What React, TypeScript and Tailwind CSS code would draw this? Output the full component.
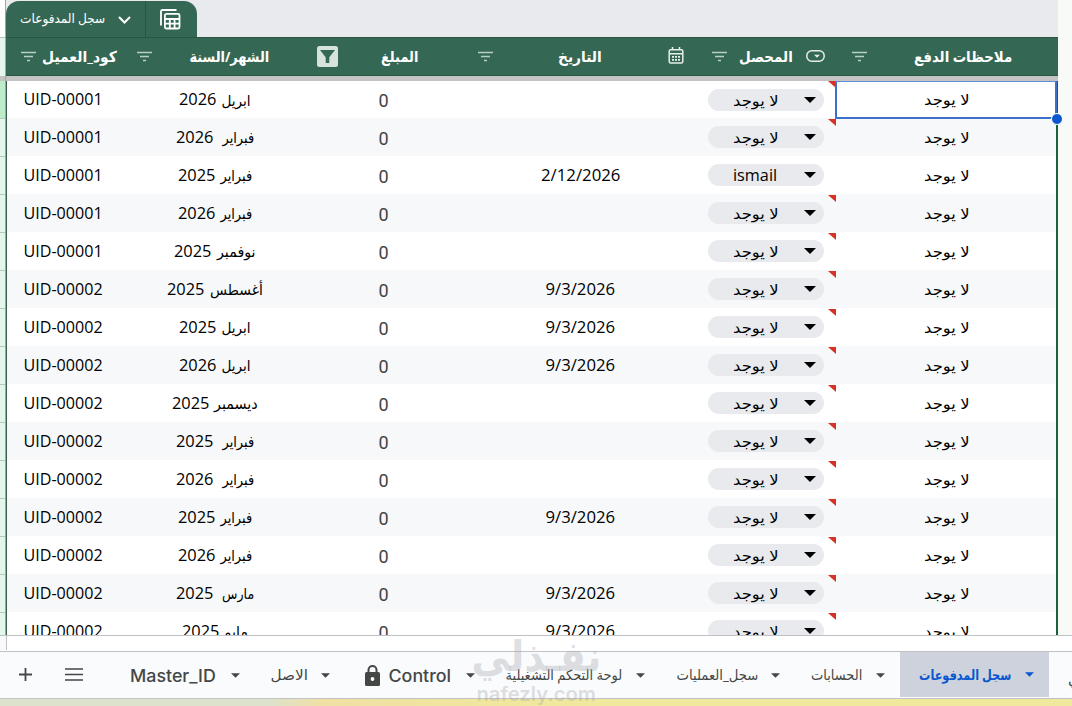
import React from 'react';

const months = [
  ['ابريل', '2026'], ['فبراير', '2026'], ['فبراير', '2025'], ['فبراير', '2026'], ['نوفمبر', '2025'],
  ['أغسطس', '2025'], ['ابريل', '2025'], ['ابريل', '2026'], ['ديسمبر', '2025'], ['فبراير', '2025'],
  ['فبراير', '2026'], ['فبراير', '2025'], ['فبراير', '2026'], ['مارس', '2025'], ['مايو', '2025'],
];
const monthWidths = [29, 32, 32, 32, 39, 53, 29, 29, 44, 32, 32, 32, 32, 32, 24];
const wideGap = [1, 9, 10, 13];
const dates = ['', '', '2/12/2026', '', '', '9/3/2026', '9/3/2026', '9/3/2026', '', '', '', '9/3/2026', '', '9/3/2026', '9/3/2026'];

/* Centres one line of text and condenses or expands it to the given width. */
function Fit({ w, children, className = '', rtl = false }: { w: number; children: string; className?: string; rtl?: boolean }) {
  const ref = React.useRef<HTMLSpanElement>(null);
  const [scale, setScale] = React.useState(1);
  React.useLayoutEffect(() => {
    if (ref.current) setScale(w / ref.current.offsetWidth);
  }, [w, children]);
  return (
    <span className="flex shrink-0 justify-center" style={{ width: w }}>
      <span ref={ref} dir={rtl ? 'rtl' : 'ltr'} className={`inline-block shrink-0 whitespace-pre ${className}`} style={{ transform: `scaleX(${scale})` }}>
        {children}
      </span>
    </span>
  );
}

function FilterLines({ className = '' }: { className?: string }) {
  return (
    <svg className={`h-[11px] w-[15px] shrink-0 ${className}`} viewBox="0 0 15 11" fill="none" stroke="#b9cfc4" strokeWidth="1.4">
      <path d="M0 1.5h15M3 5.5h9M6 9.5h3" />
    </svg>
  );
}

function Caret({ className = '' }: { className?: string }) {
  return (
    <svg className={`shrink-0 ${className}`} viewBox="0 0 12 6" fill="currentColor">
      <path d="M0 0h12L6 6z" />
    </svg>
  );
}

const headText = 'text-[15px] font-bold text-white';

function Header() {
  return (
    <div className="flex h-[39px] items-center border-y border-[#26583f] bg-[#356854] pl-[15px]">
      <FilterLines />
      <div className="ml-[6px]"><Fit w={75} rtl className={headText}>كود_العميل</Fit></div>
      <FilterLines className="ml-[20px]" />
      <div className="ml-[37px]"><Fit w={80} rtl className={headText}>الشهر/السنة</Fit></div>
      <svg className="ml-[48px] h-[21px] w-[21px] shrink-0" viewBox="0 0 21 21">
        <rect width="21" height="21" rx="2.5" fill="#d7e3dc" />
        <path d="M3 4h15l-5.7 7.2V17H8.7v-5.8z" fill="#356854" />
      </svg>
      <div className="ml-[43px]"><Fit w={37} rtl className={headText}>المبلغ</Fit></div>
      <FilterLines className="ml-[60px]" />
      <div className="ml-[65px]"><Fit w={44} rtl className={headText}>التاريخ</Fit></div>
      <svg className="ml-[66px] h-[17px] w-[16px] shrink-0 -translate-y-px" viewBox="0 0 16 17" fill="none" stroke="#e5eee9" strokeWidth="1.5">
        <rect x="1.2" y="2.7" width="13.6" height="13.3" rx="1.5" />
        <path d="M1 6.7h14M4.5 0v3M11.5 0v3" />
        <path d="M4 9.8h2M7 9.8h2M10 9.8h2M4 12.8h2M7 12.8h2M10 12.8h2" strokeWidth="1.8" />
      </svg>
      <FilterLines className="ml-[28px]" />
      <div className="ml-[12px]"><Fit w={54} rtl className={headText}>المحصل</Fit></div>
      <svg className="ml-[13px] h-[12px] w-[19px] shrink-0 -translate-y-px" viewBox="0 0 19 12" fill="none">
        <rect x=".8" y=".8" width="17.4" height="10.4" rx="5" stroke="#e5eee9" strokeWidth="1.5" />
        <path d="M8 4.7h6l-3 3z" fill="#e5eee9" />
      </svg>
      <FilterLines className="ml-[27px]" />
      <div className="ml-[47px]"><Fit w={98} rtl className={headText}>ملاحظات الدفع</Fit></div>
    </div>
  );
}

function Row({ i }: { i: number }) {
  const name = i === 2;
  const cell = `flex items-center justify-center ${i === 0 ? '' : 'pt-px'}`;
  return (
    <div className={`grid shrink-0 grid-cols-[112px_192px_145px_249px_131px_221px] text-[15px] text-black ${i === 0 ? 'h-[37px]' : 'h-[38px]'} ${i % 2 ? 'bg-[#f6f8f9]' : 'bg-white'}`}>
      <div className={cell}><Fit w={79} className="text-[15.5px]">{i < 5 ? 'UID-00001' : 'UID-00002'}</Fit></div>
      <div className={`${cell} ${wideGap.includes(i) ? 'gap-[9px]' : 'gap-[5px]'}`}>
        <Fit w={37} className="text-[15.5px]">{months[i][1]}</Fit>
        <Fit w={monthWidths[i]} rtl>{months[i][0]}</Fit>
      </div>
      <div className={`flex items-center justify-center font-['Roboto',sans-serif] text-[18px] text-[#434343] ${i === 0 ? 'pt-px' : 'pt-[2px]'}`}>0</div>
      <div className={cell}>{dates[i] && <Fit w={i === 2 ? 79 : 70} className="text-[15.5px]">{dates[i]}</Fit>}</div>
      <div className="relative flex items-center pl-[3px]">
        <div className="flex h-[22px] w-[116px] items-center justify-between rounded-full bg-[#e8eaed] pr-[8px] pl-[25px]">
          <span className="pt-px">{name ? <Fit w={44} className="text-[15.5px]">ismail</Fit> : <Fit w={46} rtl>لا يوجد</Fit>}</span>
          <Caret className="h-[6px] w-[12px] text-black" />
        </div>
        {!name && (
          <svg className={`absolute right-0 h-[7px] w-[8px] ${i ? 'top-px' : 'top-0'}`} viewBox="0 0 8 7"><path d="M0 0h8v7z" fill="#d93025" /></svg>
        )}
      </div>
      {i === 0 ? (
        <div className="relative z-10 -ml-px flex h-[38px] items-center justify-center border-2 border-t border-[#3d70c9] border-t-[#5d8dd8] pl-px">
          <Fit w={46} rtl>لا يوجد</Fit>
          <span className="absolute -right-[8px] -bottom-[8px] box-content h-[10px] w-[10px] rounded-full border border-white bg-[#0b57d0]" />
        </div>
      ) : (
        <div className={cell}><Fit w={46} rtl>لا يوجد</Fit></div>
      )}
    </div>
  );
}

function TabCaret({ className = '' }: { className?: string }) {
  return <Caret className={`h-[5px] w-[9px] ${className}`} />;
}

const tabArabic = 'text-[14px] leading-[20px]';
const tabLatin = "font-['Inter',sans-serif] text-[17px] font-medium leading-[20px]";

function Tabs() {
  return (
    <div className="flex h-[48px] shrink-0 items-center overflow-hidden border-y border-[#bfc1c4] bg-[#f9fbfd] pl-[19px] text-[#444746]">
      <svg className="h-[13px] w-[13px] shrink-0 -translate-y-px" viewBox="0 0 13 13" stroke="currentColor" strokeWidth="1.8"><path d="M6.5 0v13M0 6.5h13" /></svg>
      <svg className="ml-[33px] h-[13px] w-[18px] shrink-0 -translate-y-px" viewBox="0 0 18 13" stroke="currentColor" strokeWidth="1.7"><path d="M0 1h18M0 6.5h18M0 12h18" /></svg>
      <div className="ml-[47px] pt-[2px]"><Fit w={86} className={tabLatin}>Master_ID</Fit></div>
      <TabCaret className="ml-[15px]" />
      <div className="ml-[31px]"><Fit w={37} rtl className={tabArabic}>الاصل</Fit></div>
      <TabCaret className="ml-[13px]" />
      <svg className="ml-[35px] h-[21px] w-[15px] shrink-0" viewBox="0 0 15 21" fill="none">
        <path d="M3.5 8V5a4 4 0 0 1 8 0v3" stroke="#444746" strokeWidth="2" />
        <rect y="7" width="15" height="14" rx="1.5" fill="#444746" />
        <circle cx="7.5" cy="14" r="1.9" fill="#f9fbfd" />
      </svg>
      <div className="ml-[8px] pt-[2px]"><Fit w={63} className={tabLatin}>Control</Fit></div>
      <TabCaret className="ml-[15px]" />
      <div className="ml-[30px]"><Fit w={117} rtl className={tabArabic}>لوحة التحكم التشغيلية</Fit></div>
      <TabCaret className="ml-[14px]" />
      <div className="ml-[31px]"><Fit w={82} rtl className={tabArabic}>سجل_العمليات</Fit></div>
      <TabCaret className="ml-[13px]" />
      <div className="ml-[31px]"><Fit w={51} rtl className={tabArabic}>الحسابات</Fit></div>
      <TabCaret className="ml-[14px]" />
      <div className="ml-[15px] flex h-[45px] w-[149px] shrink-0 items-center self-start bg-[#cdd2dc] pl-[19px] text-[#0b57d0]">
        <Fit w={92} rtl className="text-[14px] font-bold">سجل المدفوعات</Fit>
        <TabCaret className="ml-[14px]" />
      </div>
      <div className="ml-[19px] shrink-0 pt-[6px] text-[15px]">ي</div>
    </div>
  );
}

export default function App() {
  return (
    <div className="relative flex h-[706px] w-[1072px] flex-col overflow-hidden bg-white font-['Open_Sans','DejaVu_Sans',sans-serif]">
      <div className="flex h-[635px] shrink-0 overflow-hidden">
        <div className="flex w-[6px] shrink-0 flex-col border-r border-[#9ba9a1]">
          <div className="h-[38px] shrink-0 border-b border-[#b9c2bd] bg-white" />
          <div className="h-[38px] shrink-0 bg-[#e6f5ee]" />
          <div className="h-[5px] shrink-0 bg-[#c3c3c3]" />
          {months.map((_, i) => (
            <div key={i} className={`h-[38px] shrink-0 border-b border-[#b3cbbe] ${i === 0 ? 'bg-[#bdecca]' : 'bg-[#e2f6ec]'}`} />
          ))}
        </div>
        <div className="flex w-[1052px] shrink-0 flex-col">
          <div className="flex h-[37px] shrink-0 bg-[#e8eaed]">
            <div className="mt-px flex h-[36px] w-[191px] items-center rounded-t-[13px] bg-[#356854] pl-[14px]">
              <Fit w={85} rtl className="text-[13px] text-white">سجل المدفوعات</Fit>
              <svg className="ml-[13px] h-[8px] w-[13px] shrink-0 translate-y-px" viewBox="0 0 13 8" fill="none" stroke="white" strokeWidth="2"><path d="M1 1l5.5 5.5L12 1" /></svg>
              <div className="ml-[14px] h-full w-px bg-[#285640]" />
              <svg className="ml-[14px] h-[21px] w-[21px] shrink-0" viewBox="0 0 21 21" fill="none" stroke="white" strokeWidth="1.8">
                <path d="M1 16.5V2.5Q1 1 2.5 1h14" />
                <rect x="4.9" y="4.9" width="14.6" height="14.6" rx="1.5" />
                <path d="M5 10h14.500M5 14.700h14.500M9.800 10v9.500M14.600 10v9.500" />
              </svg>
            </div>
          </div>
          <Header />
          <div className="h-[5px] shrink-0 bg-[#c3c3c3]" />
          <div className="flex h-[554px] flex-col border-r-2 border-l border-r-[#1b6337] border-l-[#3f5d4f]">
            {months.map((_, i) => <Row key={i} i={i} />)}
          </div>
        </div>
        <div className="flex-1 bg-[#f8faf7]" />
      </div>
      <div className="h-[16px] shrink-0 border-t border-[#bfc1c4] bg-white">
        <div className="h-[14px] w-[7px] border-r border-[#bfc1c4] bg-[#f8f9fa]" />
      </div>
      <Tabs />
      <div className="h-[7px] shrink-0 bg-linear-to-r from-[#dce2cc] from-25% via-[#f0e0a4] via-30% to-[#f0e89c] to-50%" />
      <div className="pointer-events-none absolute top-[632px] left-[471px] flex w-[130px] flex-col items-center font-bold text-[#a9adb0]/40">
        <div className="h-[51px] text-[42px] leading-[49px]"><Fit w={130} rtl className="font-['DejaVu_Sans',sans-serif]">نفـذلي</Fit></div>
        <div className="h-[22px] text-[20px] leading-[22px] font-semibold"><Fit w={119} className="font-['Inter',sans-serif]">nafezly.com</Fit></div>
      </div>
    </div>
  );
}
